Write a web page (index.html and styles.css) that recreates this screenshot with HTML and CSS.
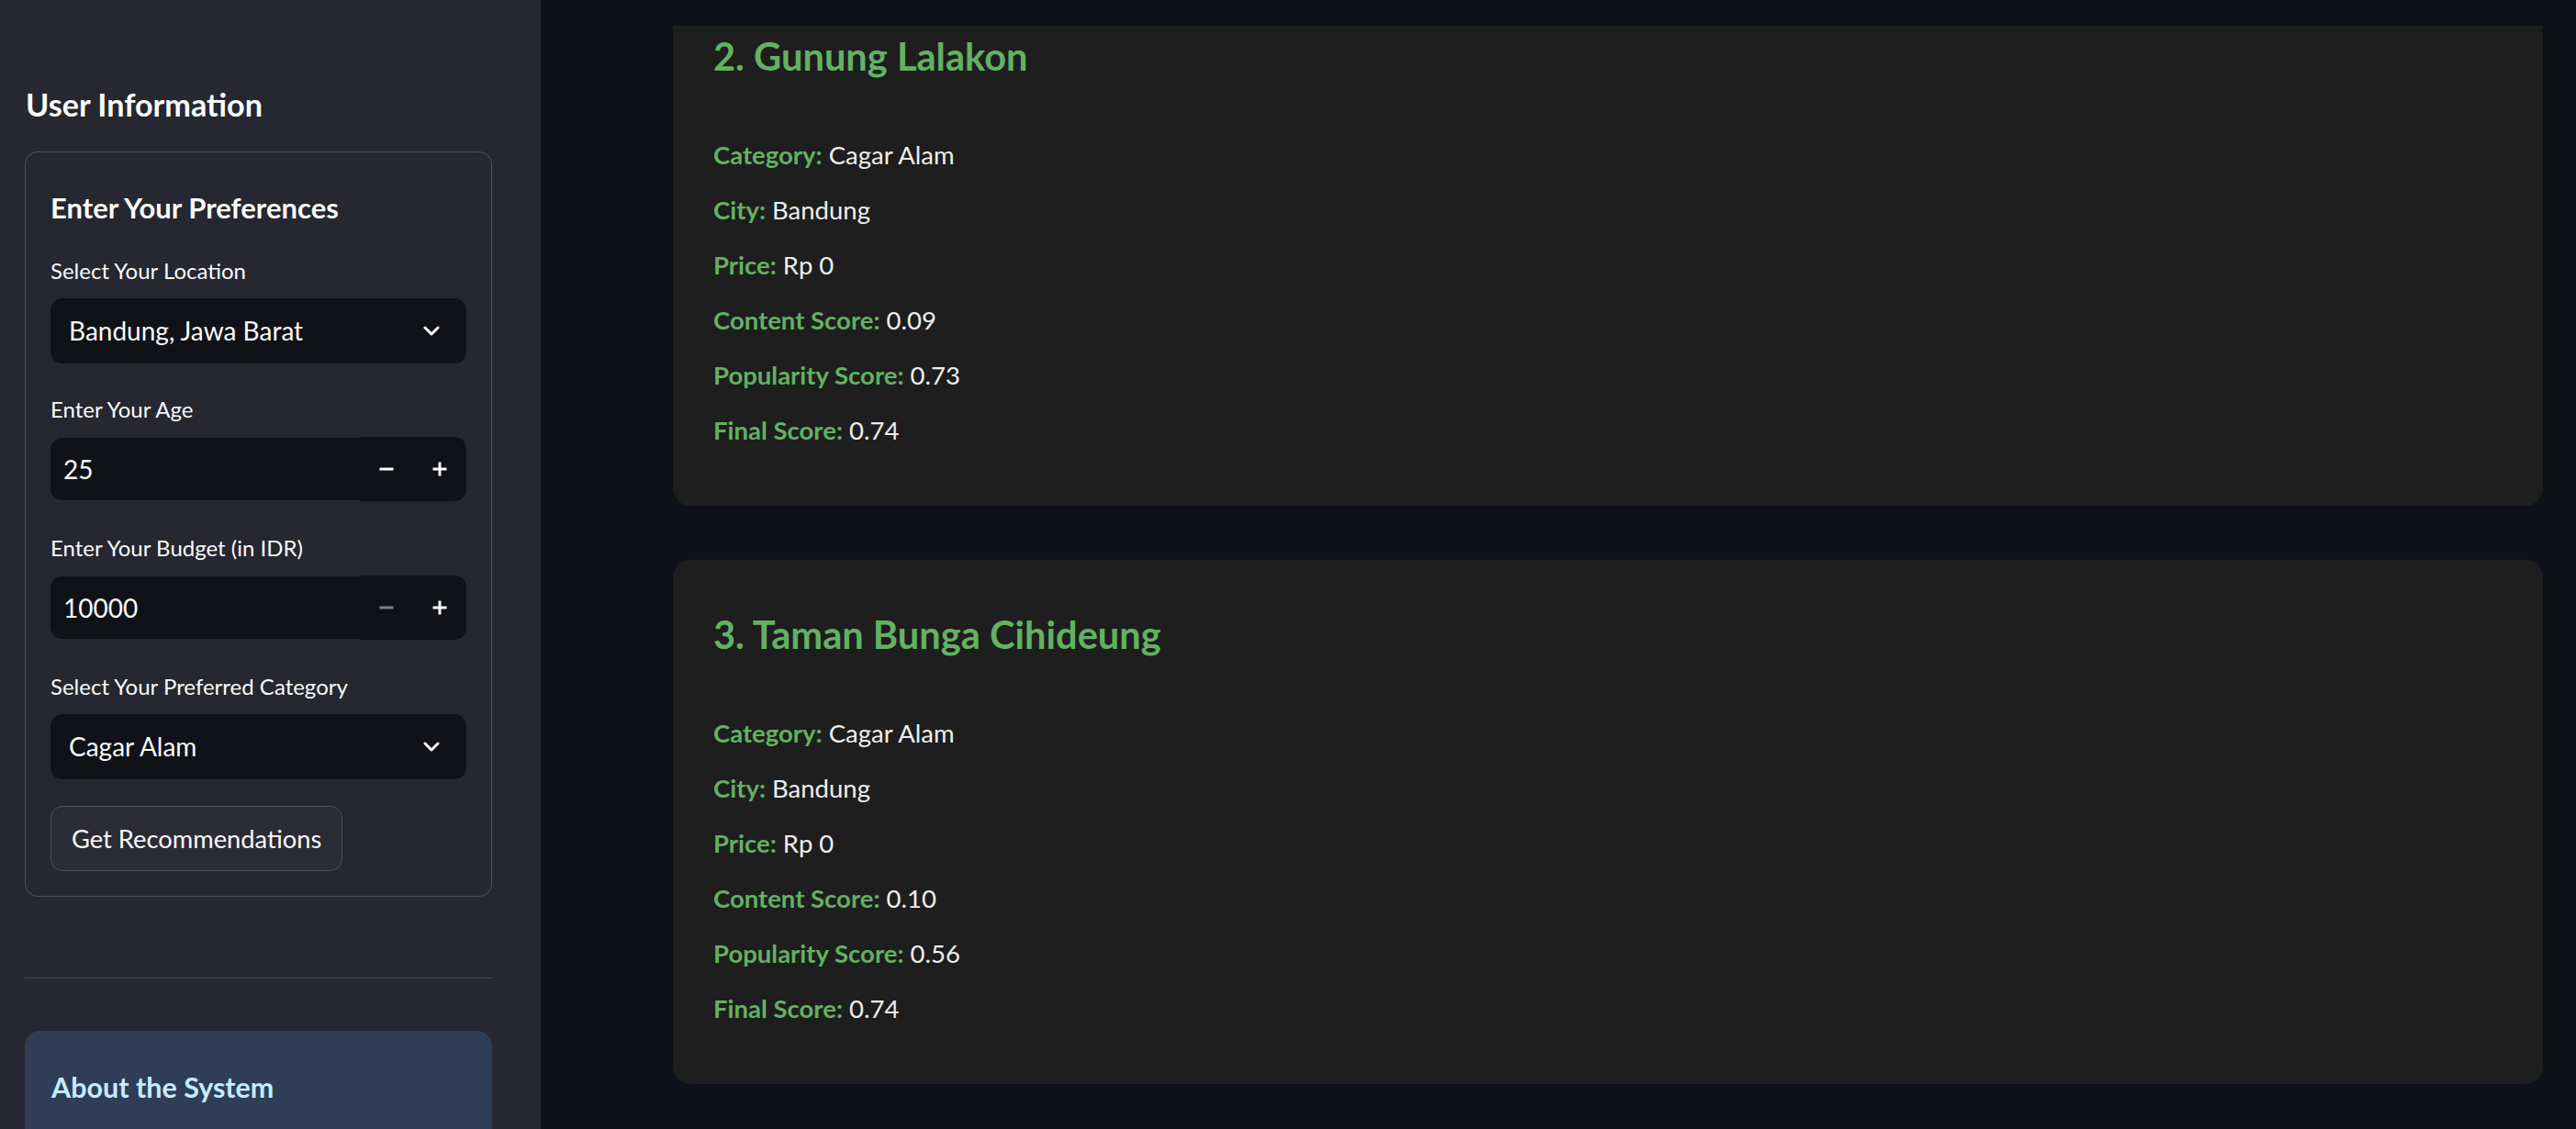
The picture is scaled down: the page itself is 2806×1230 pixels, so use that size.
FILE: index.html
```html
<!DOCTYPE html>
<html lang="en">
<head>
<meta charset="utf-8">
<title>Tourism Recommendation</title>
<link rel="stylesheet" href="styles.css">
</head>
<body>
<div class="app">
  <aside class="sidebar">
    <h2 class="side-title">User Information</h2>
    <form class="form-box">
      <h3 class="form-title">Enter Your Preferences</h3>

      <div class="widget w-first">
        <div class="label">Select Your Location</div>
        <div class="select">
          <span class="select-value">Bandung, Jawa Barat</span>
          <svg class="chev" width="18" height="11" viewBox="0 0 18 11"><polyline points="2,2 9,9 16,2" fill="none" stroke="#fafafa" stroke-width="3" stroke-linecap="round" stroke-linejoin="round"/></svg>
        </div>
      </div>

      <div class="widget w-age">
        <div class="label">Enter Your Age</div>
        <div class="number">
          <div class="number-field">25</div>
          <div class="stepper">
            <span class="step"><svg width="16" height="16" viewBox="0 0 16 16"><rect x="0.5" y="6.5" width="15" height="3" fill="#fafafa"/></svg></span>
            <span class="step"><svg width="16" height="16" viewBox="0 0 16 16"><rect x="0.5" y="6.5" width="15" height="3" fill="#fafafa"/><rect x="6.5" y="0.5" width="3" height="15" fill="#fafafa"/></svg></span>
          </div>
        </div>
      </div>

      <div class="widget">
        <div class="label">Enter Your Budget (in IDR)</div>
        <div class="number">
          <div class="number-field">10000</div>
          <div class="stepper">
            <span class="step"><svg width="16" height="16" viewBox="0 0 16 16"><rect x="0.5" y="6.5" width="15" height="3" fill="#7d7f8a"/></svg></span>
            <span class="step"><svg width="16" height="16" viewBox="0 0 16 16"><rect x="0.5" y="6.5" width="15" height="3" fill="#fafafa"/><rect x="6.5" y="0.5" width="3" height="15" fill="#fafafa"/></svg></span>
          </div>
        </div>
      </div>

      <div class="widget">
        <div class="label">Select Your Preferred Category</div>
        <div class="select select-cat">
          <span class="select-value">Cagar Alam</span>
          <svg class="chev" width="18" height="11" viewBox="0 0 18 11"><polyline points="2,2 9,9 16,2" fill="none" stroke="#fafafa" stroke-width="3" stroke-linecap="round" stroke-linejoin="round"/></svg>
        </div>
      </div>

      <div class="btn-row">
        <button type="button" class="btn">Get Recommendations</button>
      </div>
    </form>

    <hr class="divider">

    <div class="info-box">
      <h3 class="info-title">About the System</h3>
    </div>
  </aside>

  <main class="main">
    <div class="topbar"></div>
    <div class="results">
      <section class="card">
        <h3 class="card-title">2. Gunung Lalakon</h3>
        <p class="row"><b>Category:</b> Cagar Alam</p>
        <p class="row"><b>City:</b> Bandung</p>
        <p class="row"><b>Price:</b> Rp 0</p>
        <p class="row"><b>Content Score:</b> 0.09</p>
        <p class="row"><b>Popularity Score:</b> 0.73</p>
        <p class="row"><b>Final Score:</b> 0.74</p>
      </section>
      <section class="card">
        <h3 class="card-title">3. Taman Bunga Cihideung</h3>
        <p class="row"><b>Category:</b> Cagar Alam</p>
        <p class="row"><b>City:</b> Bandung</p>
        <p class="row"><b>Price:</b> Rp 0</p>
        <p class="row"><b>Content Score:</b> 0.10</p>
        <p class="row"><b>Popularity Score:</b> 0.56</p>
        <p class="row"><b>Final Score:</b> 0.74</p>
      </section>
    </div>
  </main>
</div>
</body>
</html>
```

FILE: styles.css
```css
* { box-sizing: border-box; }

html, body {
  margin: 0;
  padding: 0;
  width: 2806px;
  height: 1230px;
  overflow: hidden;
  background: #0e1117;
  font-family: Lato, "Source Sans Pro", "Noto Sans", sans-serif;
  color: #fafafa;
}

.app {
  display: flex;
  height: 1230px;
}

/* ---------- Sidebar ---------- */
.sidebar {
  width: 589px;
  flex-shrink: 0;
  background: #262730;
  padding: 94px 53px 0 27px;
  overflow: hidden;
}

.side-title {
  margin: 0;
  padding-left: 1px;
  font-size: 34.2px;
  line-height: 40px;
  font-weight: 700;
  color: #fafafa;
}

.form-box {
  margin-top: 31px;
  border: 1px solid #4e4f58;
  border-radius: 14px;
  padding: 42px 27px 27px 27px;
  display: flex;
  flex-direction: column;
}

.form-title {
  margin: 0;
  font-size: 31px;
  line-height: 36px;
  font-weight: 700;
}

.widget {
  margin-top: 35px;
  display: flex;
  flex-direction: column;
  gap: 14px;
}
.w-first { margin-top: 35px; }
.w-age { margin-top: 34px; }

.label {
  font-size: 24px;
  line-height: 32px;
  color: #fafafa;
}

.select {
  height: 71px;
  background: #111218;
  border-radius: 13px;
  display: flex;
  align-items: center;
  justify-content: space-between;
  padding: 0 29px 0 20px;
}
.select-value {
  font-size: 28px;
  line-height: 71px;
}
.chev { display: block; }

.number {
  height: 70px;
  display: flex;
}
.number-field {
  flex: 1;
  margin: 1px 0;
  background: #111218;
  border-radius: 13px 0 0 13px;
  padding-left: 14px;
  font-size: 28px;
  line-height: 68px;
}
.stepper {
  width: 116px;
  display: flex;
  background: #111218;
  border-radius: 0 13px 13px 0;
}
.step {
  flex: 1;
  display: flex;
  align-items: center;
  justify-content: center;
}
.step svg { display: block; }

.btn-row {
  margin-top: 29px;
  display: flex;
}
.btn {
  height: 71px;
  padding: 0 22px;
  background: #2b2c36;
  border: 1px solid #4e4f58;
  border-radius: 13px;
  color: #fafafa;
  font-family: inherit;
  font-size: 27.3px;
  line-height: 69px;
}

.divider {
  margin: 88px 0 0 0;
  border: 0;
  height: 1px;
  background: #4a4b53;
}

.info-box {
  margin-top: 57px;
  background: #2e3e56;
  border-radius: 17px;
  padding: 42px 29px 40px;
  height: 200px;
}
.info-title {
  margin: 0;
  font-size: 30.5px;
  line-height: 38px;
  font-weight: 700;
  color: #c7ebff;
}

/* ---------- Main ---------- */
.main {
  flex: 1;
  position: relative;
  overflow: hidden;
  padding: 0 36px 0 144px;
}

.topbar {
  position: absolute;
  top: 0;
  left: 0;
  right: 0;
  height: 28px;
  background: #0e1117;
  z-index: 2;
}

.results {
  margin-top: -20px;
  display: flex;
  flex-direction: column;
  gap: 59px;
}

.card {
  background: #1e1e1e;
  border-radius: 19px;
  padding: 56px 44px 52px;
}

.card-title {
  margin: 0 0 53px 0;
  font-size: 41.6px;
  line-height: 50px;
  font-weight: 700;
  color: #63b162;
}

.row {
  margin: 0;
  font-size: 27.5px;
  line-height: 60px;
  color: #eeeeee;
}
.row b {
  font-weight: 700;
  color: #63b162;
}
```
